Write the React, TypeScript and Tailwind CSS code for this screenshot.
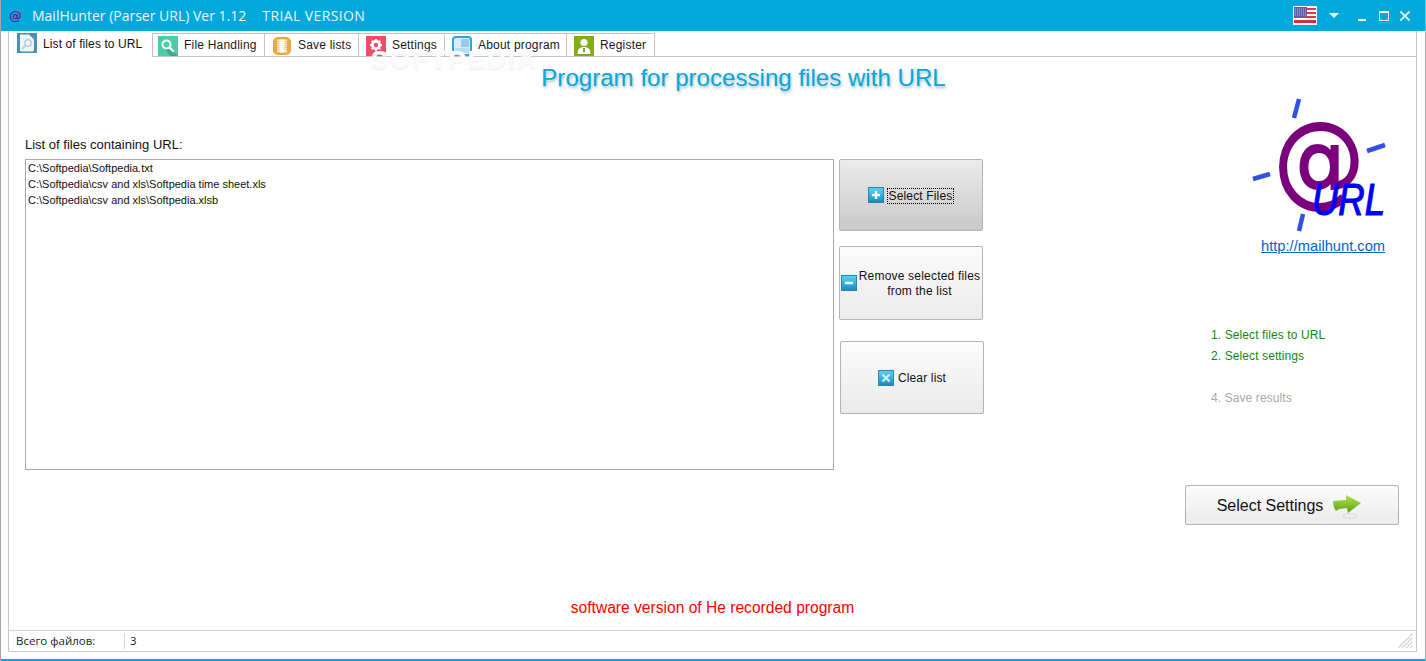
import { ReactNode } from 'react';

const sans = 'font-["Liberation_Sans",Arial,sans-serif]';

function ListIcon() {
  return (
    <svg width="20" height="20" viewBox="0 0 20 20" className="-mt-[2px]">
      <rect width="20" height="20" fill="#4a90b5" />
      <path d="M3 1.5h9l5 5v10l-1 2H4l-1-1z" fill="#eef4f8" />
      <circle cx="11" cy="10" r="3.2" fill="none" stroke="#b8cfdd" strokeWidth="1.5" />
      <path d="M8.5 12.5 5 16" stroke="#b8cfdd" strokeWidth="2" />
    </svg>
  );
}

function SearchIcon() {
  return (
    <svg width="20" height="20" viewBox="0 0 20 20">
      <rect width="20" height="20" fill="#4ccba8" />
      <path d="M11 12 20 20H12L7 13z" fill="#3cab8e" />
      <circle cx="8.5" cy="8.5" r="4" fill="none" stroke="#fff" strokeWidth="2" />
      <path d="m11.5 11.5 3.5 3.5" stroke="#fff" strokeWidth="2.4" strokeLinecap="round" />
    </svg>
  );
}

function ChipIcon() {
  return (
    <svg width="20" height="20" viewBox="0 0 20 20">
      <rect x="1" y="1" width="18" height="18" rx="5" fill="#e8aa3c" />
      <rect x="5" y="3.5" width="10" height="13" fill="#f7e9c8" />
      <rect x="8" y="3.5" width="4" height="13" fill="#fdf8ec" />
      <path d="M6 5v10M14 5v10" stroke="#d59a35" strokeWidth="1" strokeDasharray="1 1" />
    </svg>
  );
}

function GearIcon() {
  return (
    <svg width="20" height="20" viewBox="0 0 20 20">
      <rect width="20" height="20" fill="#ee4f66" />
      <path d="M10 10 20 20H10z" fill="#d94458" />
      <circle cx="10" cy="9" r="3.6" fill="none" stroke="#fff" strokeWidth="2.8" />
      <path
        d="M10 3v2M10 13v2M4 9h2M14 9h2M5.8 4.8l1.4 1.4M12.8 11.8l1.4 1.4M5.8 13.2l1.4-1.4M12.8 6.2l1.4-1.4"
        stroke="#fff"
        strokeWidth="2"
      />
    </svg>
  );
}

function BookIcon() {
  return (
    <svg width="20" height="20" viewBox="0 0 20 20">
      <rect x="1" y="1" width="18" height="18" rx="3" fill="#d8eefa" stroke="#27a7e3" strokeWidth="2" />
      <rect x="9" y="3" width="8" height="8" fill="#8fcdee" />
      <rect x="3" y="12" width="14" height="5" fill="#b5def4" />
    </svg>
  );
}

function PersonIcon() {
  return (
    <svg width="20" height="20" viewBox="0 0 20 20">
      <rect width="20" height="20" fill="#7fae18" />
      <circle cx="10" cy="6.5" r="3.6" fill="#fff" />
      <path d="M3.5 18c0-5 2.5-7 6.5-7s6.500 2 6.500 7z" fill="#fff" />
      <path d="M10 12v4" stroke="#5c8a10" strokeWidth="1.6" />
    </svg>
  );
}

function Tab({ icon, label, width }: { icon: ReactNode; label: string; width: string }) {
  return (
    <div className={`${width} mt-[2px] h-[24px] flex items-end pl-[7px] first:pl-[5px] gap-[6px] border border-[#c4c4c4] border-l-0 first:border-l bg-white overflow-hidden`}>
      {icon}
      <span className="text-[12px] leading-[22px] tracking-[0.2px] text-[#1a1a1a] whitespace-nowrap">{label}</span>
    </div>
  );
}

function ActionIcon({ kind }: { kind: 'plus' | 'minus' | 'cross' }) {
  return (
    <svg width="16" height="16" viewBox="0 0 16 16" className="shrink-0">
      <defs>
        <linearGradient id={`g-${kind}`} x1="0" y1="0" x2="0" y2="1">
          <stop offset="0" stopColor="#5fd0f2" />
          <stop offset="0.5" stopColor="#35b6e6" />
          <stop offset="1" stopColor="#1c86b8" />
        </linearGradient>
      </defs>
      <rect x="0.500" y="0.500" width="15" height="15" fill={`url(#g-${kind})`} stroke="#2a86ad" />
      {kind === 'plus' && <path d="M8 4v8M4 8h8" stroke="#fff" strokeWidth="2.4" />}
      {kind === 'minus' && <path d="M4 8h8" stroke="#fff" strokeWidth="2.4" />}
      {kind === 'cross' && <path d="m4.500 4.500 7 7m0-7-7 7" stroke="#d6f0fa" strokeWidth="2.2" />}
    </svg>
  );
}

function Logo() {
  return (
    <svg width="149" height="138" viewBox="0 0 149 138" className="block">
      <g stroke="#3050e8" strokeWidth="4.500">
        <path d="M49 2 44 21" />
        <path d="M117 54 135 48" />
        <path d="M3 82 20 77" />
        <path d="M53 117 49 134" />
      </g>
      <text x="24" y="97" fontFamily="DejaVu Sans" fontSize="100" fill="#7b007b" stroke="#7b007b" strokeWidth="2" textLength="90" lengthAdjust="spacingAndGlyphs">@</text>
      <text x="62" y="118" fontFamily="Liberation Sans" fontStyle="italic" fontSize="44" fill="#0000ff" stroke="#0000ff" strokeWidth="1.200" textLength="73" lengthAdjust="spacingAndGlyphs">URL</text>
    </svg>
  );
}

function WindowIcons() {
  return (
    <div className="flex items-center">
      <svg width="24" height="19" viewBox="0 0 24 19">
        <rect width="24" height="19" fill="#f4f4f4" />
        <rect x="1" y="1" width="22" height="17" fill="#fff" />
        {[2, 6, 10].map((y) => (
          <rect key={y} x="1" y={y} width="22" height="2" fill="#e5354a" />
        ))}
        <rect x="1" y="14" width="22" height="3" fill="#d42c40" />
        <rect x="1" y="1" width="13" height="10" fill="#5c5ca8" />
        <path d="M2 3h11M2 5h11M2 7h11M2 9h11" stroke="#b9b9dc" strokeWidth="1" strokeDasharray="1 1" />
      </svg>
      <svg width="10" height="5" viewBox="0 0 10 5" className="ml-[12px]">
        <path d="M0 0h10L5 5z" fill="#fff" />
      </svg>
      <svg width="8" height="2" viewBox="0 0 8 2" className="ml-[19px] mt-[8px]">
        <rect width="8" height="2" fill="#fff" />
      </svg>
      <svg width="10" height="10" viewBox="0 0 10 10" className="ml-[13px]">
        <path d="M0.500 0.500h9v9h-9z" fill="none" stroke="#fff" />
        <rect width="10" height="2" fill="#fff" />
      </svg>
      <svg width="10" height="10" viewBox="0 0 10 10" className="ml-[11px] mr-[16px]">
        <path d="m0.500 0.500 9 9m0-9-9 9" stroke="#fff" strokeWidth="1.600" />
      </svg>
    </div>
  );
}

const files = [
  'C:\\Softpedia\\Softpedia.txt',
  'C:\\Softpedia\\csv and xls\\Softpedia time sheet.xls',
  'C:\\Softpedia\\csv and xls\\Softpedia.xlsb',
];

export default function App() {
  return (
    <div className={`${sans} w-[1426px] h-[661px] flex flex-col overflow-hidden bg-white border-x border-[#a8a8a8]`}>
      {/* Title bar */}
      <div className="h-[31px] shrink-0 -mx-px bg-[#00a8db] flex items-center justify-between">
        <div className="flex items-center pl-[9px] text-[14px] text-[#e6f7fc] font-['Open_Sans',sans-serif]">
          <span className="w-[23px] text-[13px] font-bold text-[#6a1f9a] font-['DejaVu_Sans',sans-serif]">@</span>
          <span>MailHunter (Parser URL) Ver 1.12</span>
          <span className="ml-[16px] tracking-[0.4px]">TRIAL VERSION</span>
        </div>
        <WindowIcons />
      </div>

      {/* Panel */}
      <div className="flex-1 min-h-0 ml-[7px] mr-[8px] flex flex-col border-x border-b border-[#c8c8c8]">
        {/* Tabs */}
        <div className="h-[26px] shrink-0 flex items-start">
          <div className="w-[143px] h-[26px] shrink-0 flex items-center pl-[8px] gap-[6px] bg-white">
            <ListIcon />
            <span className="text-[12px] tracking-[0.1px] text-[#111] whitespace-nowrap">List of files to URL</span>
          </div>
          <div className="flex-1 flex h-[26px] border-b border-[#c4c4c4] items-start">
            <Tab icon={<SearchIcon />} label="File Handling" width="w-[113px]" />
            <Tab icon={<ChipIcon />} label="Save lists" width="w-[94px]" />
            <Tab icon={<GearIcon />} label="Settings" width="w-[86px]" />
            <Tab icon={<BookIcon />} label="About program" width="w-[122px]" />
            <Tab icon={<PersonIcon />} label="Register" width="w-[88px]" />
          </div>
        </div>

        {/* Content */}
        <div className="relative h-[40px] shrink-0 flex items-center justify-center pl-[62px] pt-[2px]">
          <span className="absolute left-[362px] top-[-16px] text-[26px] tracking-[2px] font-bold text-[#fafafa] [text-shadow:0_1px_1px_#eeeeee]">SOFTPEDIA</span>
          <h1 className="relative text-[24.100px] text-[#0ba5d8] [text-shadow:1px_2px_3px_rgba(0,90,130,0.4)]">
            Program for processing files with URL
          </h1>
        </div>

        <div className="flex items-start">
          <div className="w-[825px] pl-[16px] pt-[40px] shrink-0">
            <div className="h-[22px] text-[13px] leading-[16px] text-[#111]">List of files containing URL:</div>
            <div className="w-[809px] h-[311px] border border-[#a9a9a9] pl-[2px]">
              {files.map((f) => (
                <div key={f} className="h-[16px] text-[11px] leading-[16px] text-[#111]">{f}</div>
              ))}
            </div>
          </div>

          <div className="w-[146px] ml-[5px] pt-[62px] shrink-0 flex flex-col items-start text-[12px] tracking-[0.15px] text-[#111]">
            <button className="w-[144px] h-[72px] flex items-center justify-center gap-[3px] border border-[#b4b4b4] rounded-[2px] bg-gradient-to-b from-[#ececec] to-[#c9c9c9]">
              <ActionIcon kind="plus" />
              <span className="mt-[2px] border border-dotted border-black leading-[14px] px-px">Select Files</span>
            </button>
            <button className="mt-[15px] w-[144px] h-[74px] flex items-center border border-[#b4b4b4] rounded-[2px] bg-gradient-to-b from-[#fbfbfb] to-[#ebebeb]">
              <span className="ml-px"><ActionIcon kind="minus" /></span>
              <span className="flex-1 mt-[2px] text-center leading-[15px] tracking-[0.2px]">Remove selected files<br />from the list</span>
            </button>
            <button className="mt-[21px] ml-px w-[144px] h-[73px] flex items-center justify-center gap-[4px] border border-[#b4b4b4] rounded-[2px] bg-gradient-to-b from-[#fbfbfb] to-[#ebebeb]">
              <ActionIcon kind="cross" />
              <span>Clear list</span>
            </button>
          </div>

          <div className="ml-auto mr-[17px] w-[214px] shrink-0 flex flex-col">
            <div className="ml-[65px]"><Logo /></div>
            <a className="mt-[3px] ml-[76px] text-[14.700px] leading-[16px] text-[#0066cc] underline">http://mailhunt.com</a>
            <div className="mt-[71px] ml-[26px] text-[12px] tracking-[0.1px] leading-[21px] text-[#0f8a0f]">
              <div>1. Select files to URL</div>
              <div>2. Select settings</div>
              <div className="mt-[21px] text-[#a8a8a8]">4. Save results</div>
            </div>
            <button className="mt-[76px] h-[40px] w-[214px] pr-[6px] pt-[2px] flex items-center justify-center gap-[10px] border border-[#b4b4b4] rounded-[2px] bg-gradient-to-b from-[#fbfbfb] to-[#ebebeb] text-[16px] text-[#111]">
              <span>Select Settings</span>
              <svg width="28" height="26" viewBox="0 0 28 26">
                <defs>
                  <linearGradient id="arrow" x1="0" y1="0" x2="0" y2="1">
                    <stop offset="0" stopColor="#b4e04a" />
                    <stop offset="1" stopColor="#58a414" />
                  </linearGradient>
                </defs>
                <ellipse cx="17" cy="23" rx="7" ry="2" fill="none" stroke="#dddddd" strokeWidth="1.500" />
                <path d="M0 8 13 7V2l15 8-13 10-1-5-8 1-3 2c-2-3-3-6-3-10z" fill="url(#arrow)" />
              </svg>
            </button>
          </div>
        </div>

        <div className="flex-1 min-h-0 flex items-end justify-center pb-[13px] text-[15.600px] leading-[18px] text-[#ff0000]">
          software version of He recorded program
        </div>

        {/* Status bar */}
        <div className="h-[21px] shrink-0 border-t border-[#d4d4d4] flex items-center text-[11.500px] text-[#222] font-['Open_Sans',sans-serif]">
          <div className="w-[116px] pl-[7px] border-r border-[#d4d4d4] h-[16px] leading-[16px]">Всего файлов:</div>
          <div className="pl-[5px]">3</div>
          <svg width="18" height="18" viewBox="0 0 18 18" className="ml-auto mr-[2px]">
            <path d="M16 2 2 16M16 6 6 16M16 10 10 16M16 14 14 16" stroke="#c4c4c4" strokeWidth="1.500" strokeDasharray="1.400 0.800" />
          </svg>
        </div>
      </div>

      {/* Bottom edge */}
      <div className="h-[7px] shrink-0" />
      <div className="h-[2px] shrink-0 -mx-px bg-[#00a8db]" />
    </div>
  );
}
